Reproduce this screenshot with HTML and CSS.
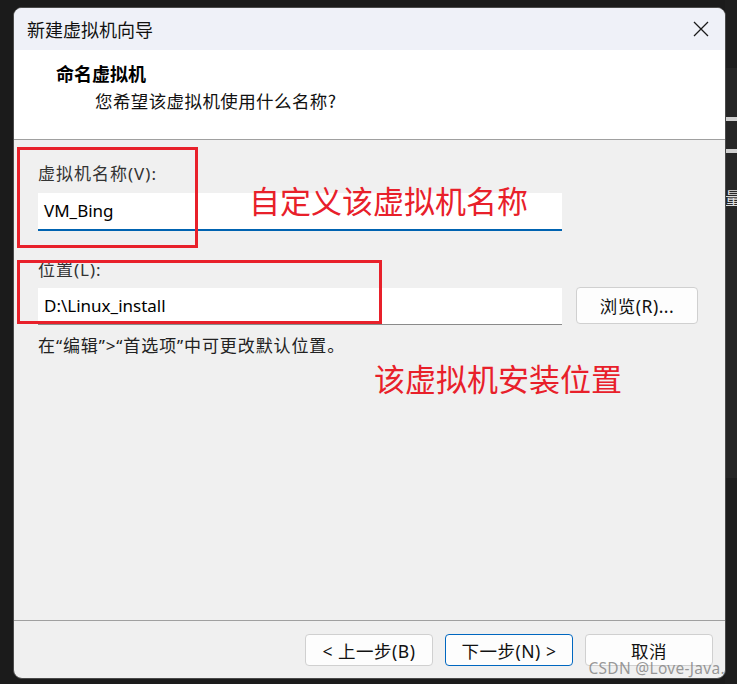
FILE: index.html
```html
<!DOCTYPE html>
<html lang="zh-CN">
<head>
    <meta charset="UTF-8">
    <meta name="viewport" content="width=device-width, initial-scale=1.0">
    <title>新建虚拟机向导</title>
    <link rel="stylesheet" href="styles.css">
</head>
<body>
    <div class="behind">
        <div class="behind-bar"></div>
        <div class="behind-line"></div>
        <div class="behind-line second"></div>
        <div class="behind-text">量</div>
    </div>

    <div class="dialog">
        <div class="titlebar">
            <span class="title">新建虚拟机向导</span>
            <svg class="close" width="16" height="16" viewBox="0 0 16 16">
                <path d="M1 1 L15 15 M15 1 L1 15" stroke="#1a1a1a" stroke-width="1.3" fill="none"/>
            </svg>
        </div>

        <div class="header">
            <div class="header-title">命名虚拟机</div>
            <div class="header-sub">您希望该虚拟机使用什么名称?</div>
        </div>

        <div class="content">
            <label class="label">虚拟机名称(V):</label>
            <div class="input active">VM_Bing</div>

            <label class="label second">位置(L):</label>
            <div class="row">
                <div class="input">D:\Linux_install</div>
                <button class="button browse">浏览(R)...</button>
            </div>

            <p class="hint">在“编辑”&gt;“首选项”中可更改默认位置。</p>
        </div>

        <div class="footer">
            <button class="button">&lt; 上一步(B)</button>
            <button class="button primary">下一步(N) &gt;</button>
            <button class="button">取消</button>
        </div>

        <!-- annotations drawn over the dialog -->
        <div class="mark mark-name"></div>
        <div class="mark mark-path"></div>
        <div class="note note-name">自定义该虚拟机名称</div>
        <div class="note note-path">该虚拟机安装位置</div>
        <div class="watermark">CSDN @Love-Java.</div>
    </div>
</body>
</html>
```

FILE: styles.css
```css
body {
    margin: 0;
    background: #1b1b1b;
    font-family: "Noto Sans", "Noto Sans CJK SC", sans-serif;
    color: #1a1a1a;
    height: 684px;
    overflow: hidden;
    position: relative;
}
.behind {
    position: absolute;
    left: 725px;
    top: 0;
    width: 12px;
    height: 684px;
    background: #1e1e1e;
}
.behind-bar {
    position: absolute;
    top: 68px;
    left: 0;
    width: 12px;
    height: 410px;
    background: #262626;
}
.behind-line {
    position: absolute;
    top: 117px;
    left: 0;
    width: 12px;
    height: 4px;
    background: #cfcfcf;
}
.behind-line.second {
    top: 149px;
}
.behind-text {
    position: absolute;
    top: 188px;
    left: 0;
    font-size: 17px;
    color: #ddd;
    line-height: 22px;
}
.dialog {
    position: relative;
    margin: 7px 0 0 13px;
    width: 711px;
    height: 670px;
    border: 1px solid #4a4a4a;
    border-radius: 9px;
    background: #f0f0f0;
    overflow: hidden;
    display: flex;
    flex-direction: column;
}
.titlebar {
    height: 42px;
    flex: none;
    background: #eff1f8;
    display: flex;
    align-items: center;
    justify-content: space-between;
    padding: 0 16px 0 13px;
}
.title {
    font-size: 18px;
    font-family: "Noto Sans CJK SC", sans-serif;
    color: #111;
}
.close {
    display: block;
}
.header {
    height: 90px;
    flex: none;
    box-sizing: border-box;
    background: #fff;
    border-bottom: 1px solid #a0a0a0;
    padding: 0 0 0 42px;
}
.header-title {
    font-family: "Noto Sans CJK SC", serif;
    font-weight: bold;
    font-size: 18px;
    line-height: 24px;
    margin-top: 11px;
    color: #000;
}
.header-sub {
    font-family: "Noto Sans CJK SC", sans-serif;
    font-size: 17.5px;
    line-height: 24px;
    margin: 4px 0 0 39px;
    letter-spacing: 0.4px;
    color: #111;
}
.content {
    flex: 1;
    padding: 22px 0 0 24px;
    display: flex;
    flex-direction: column;
    align-items: flex-start;
}
.label {
    font-size: 17px;
    line-height: 24px;
    letter-spacing: 1px;
    color: #333;
}
.label.second {
    margin-top: 27px;
}
.input {
    width: 518px;
    height: 36px;
    margin-top: 7px;
    background: #fff;
    border-bottom: 1px solid #8a8a8a;
    font-size: 17px;
    line-height: 36px;
    padding-left: 6px;
    color: #000;
}
.input.active {
    border-bottom: 2px solid #0063b1;
}
.row {
    display: flex;
    align-items: flex-start;
    gap: 14px;
    margin-top: -1px;
}
.button {
    font-family: "Noto Sans", "Noto Sans CJK SC", sans-serif;
    font-size: 17.5px;
    color: #111;
    width: 128px;
    height: 32px;
    background: #fdfdfd;
    border: 1px solid #d0d0d0;
    border-radius: 4px;
    padding: 0;
    letter-spacing: 0.5px;
}
.button.browse {
    width: 122px;
    height: 37px;
    margin-top: 6px;
}
.button.primary {
    border-color: #0067c0;
}
.hint {
    margin: 9px 0 0;
    font-size: 17px;
    line-height: 24px;
    letter-spacing: 0.9px;
    color: #222;
}
.footer {
    height: 58px;
    flex: none;
    border-top: 1px solid #a0a0a0;
    display: flex;
    justify-content: flex-end;
    align-items: flex-start;
    gap: 12px;
    padding: 13px 12px 0 0;
    box-sizing: border-box;
}
.mark {
    position: absolute;
    border: 3px solid #e8202a;
    box-sizing: border-box;
}
.mark-name {
    left: 3px;
    top: 139px;
    width: 181px;
    height: 101px;
}
.mark-path {
    left: 3px;
    top: 252px;
    width: 365px;
    height: 64px;
}
.note {
    position: absolute;
    font-family: "Noto Sans CJK SC", sans-serif;
    font-size: 31px;
    line-height: 40px;
    color: #e8202a;
}
.note-name {
    left: 235px;
    top: 172px;
}
.note-path {
    left: 360px;
    top: 350px;
}
.watermark {
    position: absolute;
    right: 0;
    bottom: 0;
    font-size: 15.5px;
    line-height: 20px;
    color: rgba(120, 120, 120, 0.75);
    letter-spacing: 0.3px;
}
```
